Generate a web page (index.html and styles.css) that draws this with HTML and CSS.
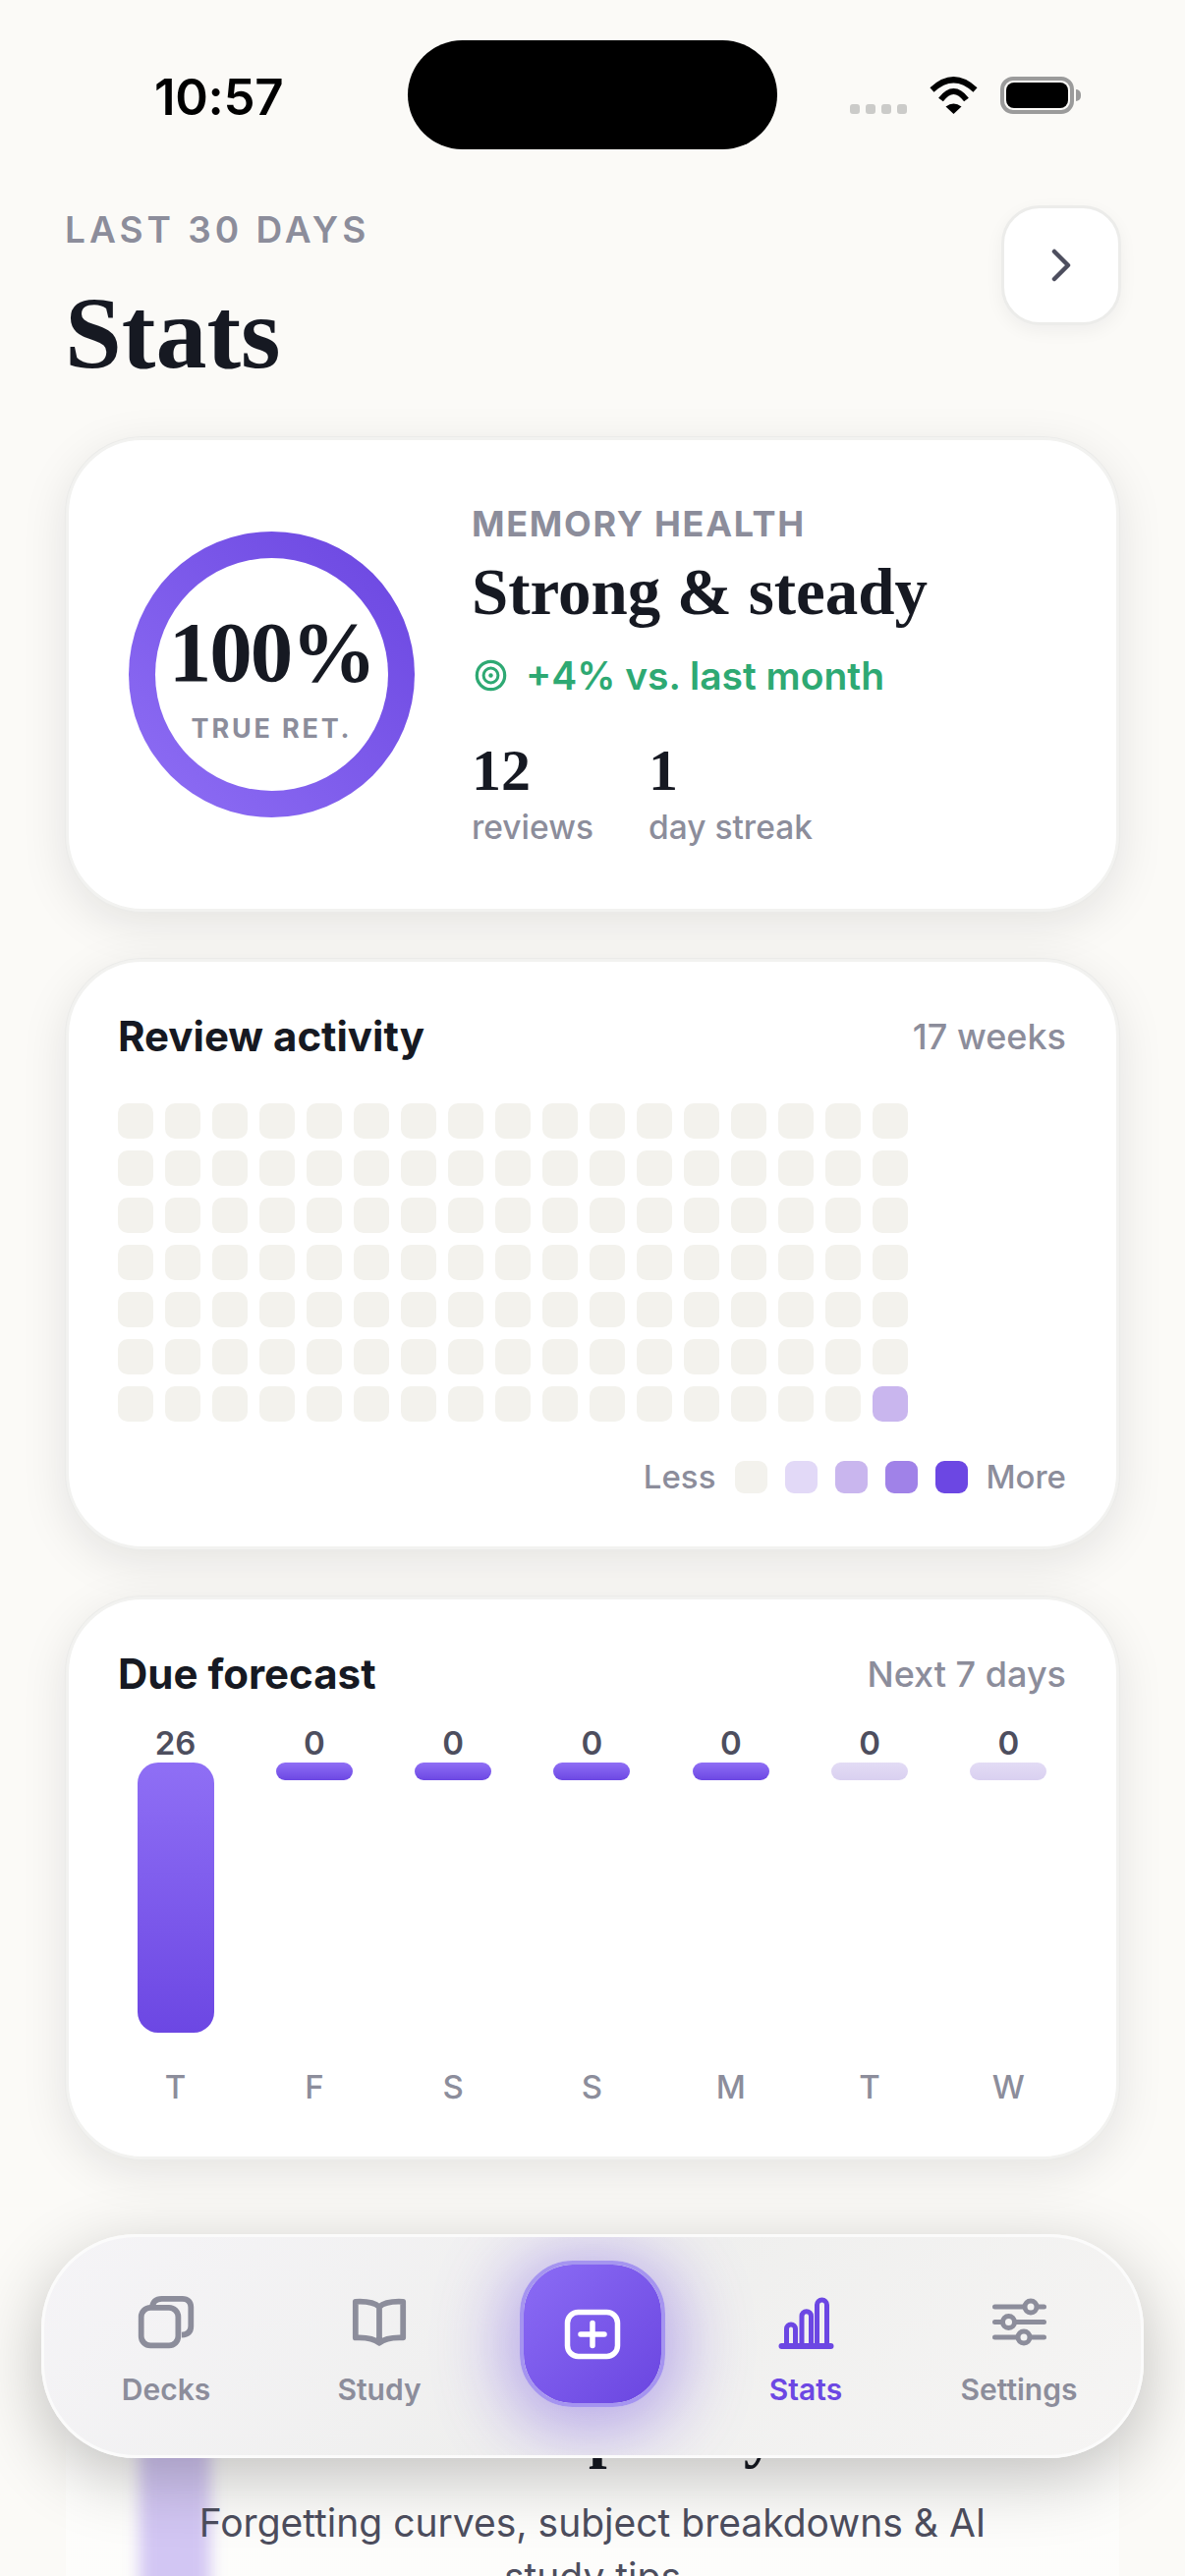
FILE: index.html
```html
<!DOCTYPE html>
<html lang="en">
<head>
<meta charset="utf-8">
<title>Stats</title>
<link rel="stylesheet" href="styles.css">
</head>
<body>
<div class="screen">
  <div class="status">
    <div class="time">10:57</div>
    <div class="island"></div>
    <div class="sys">
      <div class="dots"><i></i><i></i><i></i><i></i></div>
      <svg class="wifi" viewBox="0 0 51 38" width="51" height="38"><path d="M3.5 13.5Q25.5 -7 47.5 13.5M12.5 23.5Q25.5 6.5 38.5 23.5" fill="none" stroke="#000" stroke-width="6"/><path d="M25.5 38L17.5 30.5Q25.5 24.5 33.5 30.5Z" fill="#000"/></svg>
      <div class="battery"><div class="battery-fill"></div></div>
      <div class="battery-nub"></div>
    </div>
  </div>

  <header class="header">
    <div>
      <div class="eyebrow">LAST 30 DAYS</div>
      <h1 class="page-title">Stats</h1>
    </div>
    <button class="chev" type="button" aria-label="Next">
      <svg viewBox="0 0 24 36" width="24" height="36"><path d="M5 4L19 18L5 32" fill="none" stroke="#4d4e5e" stroke-width="4.5" stroke-linecap="round" stroke-linejoin="round"/></svg>
    </button>
  </header>

  <main class="cards">
    <section class="card health">
      <div class="ring">
        <div class="ring-hole">
          <div class="ring-num">100%</div>
          <div class="ring-label">TRUE RET.</div>
        </div>
      </div>
      <div class="health-info">
        <div class="label">MEMORY HEALTH</div>
        <div class="health-title">Strong &amp; steady</div>
        <div class="trend">
          <svg viewBox="0 0 33 33" width="33" height="33"><circle cx="16.5" cy="16.5" r="14.2" fill="none" stroke="#2ea973" stroke-width="3.2"/><circle cx="16.5" cy="16.5" r="7.4" fill="none" stroke="#2ea973" stroke-width="3"/><circle cx="16.5" cy="16.5" r="2.2" fill="#2ea973"/></svg>
          <span>+4% vs. last month</span>
        </div>
        <div class="mini-stats">
          <div><div class="mini-num">12</div><div class="mini-label">reviews</div></div>
          <div><div class="mini-num">1</div><div class="mini-label">day streak</div></div>
        </div>
      </div>
    </section>

    <section class="card activity">
      <div class="card-head"><h2 class="card-title">Review activity</h2><span class="card-note">17 weeks</span></div>
      <div class="heat">
        <i></i><i></i><i></i><i></i><i></i><i></i><i></i><i></i><i></i><i></i><i></i><i></i><i></i><i></i><i></i><i></i><i></i>
        <i></i><i></i><i></i><i></i><i></i><i></i><i></i><i></i><i></i><i></i><i></i><i></i><i></i><i></i><i></i><i></i><i></i>
        <i></i><i></i><i></i><i></i><i></i><i></i><i></i><i></i><i></i><i></i><i></i><i></i><i></i><i></i><i></i><i></i><i></i>
        <i></i><i></i><i></i><i></i><i></i><i></i><i></i><i></i><i></i><i></i><i></i><i></i><i></i><i></i><i></i><i></i><i></i>
        <i></i><i></i><i></i><i></i><i></i><i></i><i></i><i></i><i></i><i></i><i></i><i></i><i></i><i></i><i></i><i></i><i></i>
        <i></i><i></i><i></i><i></i><i></i><i></i><i></i><i></i><i></i><i></i><i></i><i></i><i></i><i></i><i></i><i></i><i></i>
        <i></i><i></i><i></i><i></i><i></i><i></i><i></i><i></i><i></i><i></i><i></i><i></i><i></i><i></i><i></i><i></i><i class="lv2"></i>
      </div>
      <div class="legend">
        <span class="legend-less">Less</span>
        <b class="swatch lv0"></b><b class="swatch lv1"></b><b class="swatch lv2"></b><b class="swatch lv3"></b><b class="swatch lv4"></b>
        <span class="legend-more">More</span>
      </div>
    </section>

    <section class="card forecast">
      <div class="card-head"><h2 class="card-title">Due forecast</h2><span class="card-note">Next 7 days</span></div>
      <div class="bars">
        <div class="col"><div class="count">26</div><div class="track"><div class="bar tall"></div></div><div class="day">T</div></div>
        <div class="col"><div class="count">0</div><div class="track"><div class="bar"></div></div><div class="day">F</div></div>
        <div class="col"><div class="count">0</div><div class="track"><div class="bar"></div></div><div class="day">S</div></div>
        <div class="col"><div class="count">0</div><div class="track"><div class="bar"></div></div><div class="day">S</div></div>
        <div class="col"><div class="count">0</div><div class="track"><div class="bar"></div></div><div class="day">M</div></div>
        <div class="col"><div class="count">0</div><div class="track"><div class="bar pale"></div></div><div class="day">T</div></div>
        <div class="col"><div class="count">0</div><div class="track"><div class="bar pale"></div></div><div class="day">W</div></div>
      </div>
    </section>

    <section class="promo">
      <div class="promo-band"></div>
      <div class="promo-title">Go deep daily.</div>
      <p class="promo-text">Forgetting curves, subject breakdowns &amp; AI study tips</p>
    </section>
  </main>

  <nav class="tabbar">
    <div class="tab">
      <svg viewBox="0 0 24 24" width="66" height="66" fill="none" stroke="#8c8d9b" stroke-width="2.1"><rect x="2.8" y="6.5" width="13.7" height="14" rx="3.4"/><path d="M6.9 6.4C7 4.4 8.2 3.2 10.4 3.2H18C20 3.2 21.2 4.4 21.2 6.4V13.4C21.2 15.5 20 16.5 17.8 16.6"/></svg>
      <span>Decks</span>
    </div>
    <div class="tab">
      <svg viewBox="0 0 24 24" width="66" height="66" fill="none" stroke="#8c8d9b" stroke-width="2.1" stroke-linejoin="round"><path d="M12 6.2C10.5 4.8 7 4.1 3.2 4.3V17.6C7 17.4 10 17.9 12 19.6C14 17.9 17 17.4 20.8 17.6V4.3C17 4.1 13.5 4.8 12 6.2ZM12 6.2V19.6"/></svg>
      <span>Study</span>
    </div>
    <div class="tab tab-fab">
      <button class="fab" type="button" aria-label="Add">
        <svg viewBox="0 0 66 66" width="66" height="66" fill="none" stroke="#fff" stroke-width="5.5" stroke-linecap="round"><rect x="7.5" y="10.5" width="51" height="45" rx="11"/><path d="M33 21.5V44.5M21 33H45"/></svg>
      </button>
    </div>
    <div class="tab active">
      <svg viewBox="0 0 66 66" width="66" height="66" fill="none" stroke="#6c47e3" stroke-width="5"><path d="M13.5 57V39.5a4.5 4.5 0 0 1 9 0V57M29 57V26.5a4.75 4.75 0 0 1 9.5 0V57M44.5 57V15a5 5 0 0 1 10 0V57"/><path d="M8.5 57H58.5" stroke-width="6" stroke-linecap="round"/></svg>
      <span>Stats</span>
    </div>
    <div class="tab">
      <svg viewBox="0 0 66 66" width="66" height="66" fill="none" stroke="#8c8d9b" stroke-width="5" stroke-linecap="round"><path d="M8.5 17H58.5M8.5 32.5H58.5M8.5 48H58.5"/><circle cx="45" cy="17" r="6" fill="#f3f3f3"/><circle cx="22.5" cy="32.5" r="6" fill="#f3f3f3"/><circle cx="38" cy="48" r="6" fill="#f3f3f3"/></svg>
      <span>Settings</span>
    </div>
  </nav>
</div>
</body>
</html>
```
FILE: styles.css
```css
* { box-sizing: border-box; }
html, body { margin: 0; padding: 0; }
body { background: #fbfaf7; font-family: Inter, "Liberation Sans", sans-serif; color: #161922; }
.screen { position: relative; width: 1206px; height: 2622px; overflow: hidden; background: #fbfaf7; }

/* status bar */
.status { display: grid; grid-template-columns: 415px 376px 1fr; height: 152px; padding-top: 41px; margin-bottom: 58px; }
.time { padding-left: 157px; font-size: 51px; font-weight: 600; line-height: 111px; color: #000; letter-spacing: -0.3px; position: relative; top: 2px; }
.island { height: 111px; background: #000; border-radius: 56px; }
.sys { display: flex; align-items: flex-start; padding: 37px 0 0 74px; }
.dots { display: flex; gap: 6px; margin-top: 28px; margin-right: 22px; }
.dots i { width: 10px; height: 10px; border-radius: 3px; background: #cbcbc9; }
.wifi { margin-right: 22px; display: block; }
.battery { width: 75px; height: 38px; border: 4px solid #9b9b9b; border-radius: 13px; padding: 2px; }
.battery-fill { width: 100%; height: 100%; background: #000; border-radius: 8px; }
.battery-nub { width: 5px; height: 12px; margin: 13px 0 0 2px; background: #9b9b9b; border-radius: 0 5px 5px 0; }

/* header */
.header { display: flex; justify-content: space-between; align-items: flex-start; padding: 0 65px 0 67px; height: 184px; margin-bottom: 51px; }
.eyebrow { margin-top: 2px; font-size: 37px; line-height: 44px; font-weight: 600; letter-spacing: 4px; color: #8c8d9b; margin-left: -1px; }
.page-title { margin: 28px 0 0 -1px; font-family: "Liberation Serif", serif; font-size: 104px; line-height: 110px; font-weight: 700; color: #161922; }
.chev { width: 122px; height: 122px; margin-top: -1px; display: flex; align-items: center; justify-content: center; padding: 0; background: #fff; border: 3px solid #ececea; border-radius: 39px; box-shadow: 0 6px 18px rgba(20, 20, 40, .05); }

/* cards */
.cards { display: flex; flex-direction: column; gap: 48px; padding: 0 67px; }
.card { position: relative; width: 1072px; background: #fff; border: 3px solid #f2f2f0; border-radius: 78px; box-shadow: 0 0 0 1px #ebebe9, 0 12px 48px rgba(20, 20, 30, .1); }

.health { display: flex; align-items: center; gap: 58px; height: 483px; padding: 0 60px 0 61px; }
.ring { flex: none; width: 291px; height: 291px; border-radius: 50%; padding: 27px; background: linear-gradient(225deg, #6a45e0 0%, #8f6ff5 100%); }
.ring-hole { width: 237px; height: 237px; border-radius: 50%; background: #fff; display: flex; flex-direction: column; align-items: center; }
.ring-num { margin-top: 54px; font-family: "Liberation Serif", serif; font-size: 87px; line-height: 84px; font-weight: 700; letter-spacing: -2px; color: #161922; }
.ring-label { margin-top: 20px; font-size: 27px; line-height: 32px; font-weight: 700; letter-spacing: 2.8px; color: #8c8d9b; }

.label { margin-top: 2px; font-size: 36px; line-height: 42px; font-weight: 700; letter-spacing: 1.7px; color: #8c8d9b; }
.health-title { margin-top: 12px; font-family: "Liberation Serif", serif; font-size: 67px; line-height: 72px; font-weight: 700; color: #161922; }
.trend { display: flex; align-items: center; gap: 19px; height: 48px; margin-top: 26px; padding-left: 3px; font-size: 39px; font-weight: 600; color: #2ea973; }
.trend svg { display: block; }
.mini-stats { display: flex; gap: 56px; margin-top: 42px; }
.mini-num { font-family: "Liberation Serif", serif; font-size: 60px; line-height: 60px; font-weight: 700; color: #161922; }
.mini-label { margin-top: 6px; font-size: 33.5px; line-height: 44px; font-weight: 500; color: #8c8d9b; }

.card-head { display: flex; justify-content: space-between; align-items: center; height: 50px; }
.card-title { margin: 0; font-size: 42px; line-height: 50px; font-weight: 700; color: #161922; }
.card-note { font-size: 36px; font-weight: 500; color: #8c8d9b; }

.activity { padding: 51px 51px 51px 50px; }
.heat { display: grid; grid-template-columns: repeat(17, 36px); grid-auto-rows: 36px; gap: 12px; margin-top: 43px; }
.heat i { display: block; border-radius: 10px; background: #f3f2ed; }
.heat i.lv2 { background: #c9b6ee; }
.legend { display: flex; justify-content: flex-end; align-items: center; gap: 18px; height: 40px; margin-top: 36px; font-size: 33px; font-weight: 500; color: #8c8d9b; }
.legend-less { margin-right: 2px; }
.swatch { display: block; width: 33px; height: 33px; border-radius: 9px; }
.lv0 { background: #f3f2ed; }
.lv1 { background: #e2d9f7; }
.lv2 { background: #c9b6ee; }
.lv3 { background: #a082e8; }
.lv4 { background: #6c47e3; }

.forecast { padding: 51px 51px 51px 50px; }
.bars { display: grid; grid-template-columns: repeat(7, 1fr); gap: 24px; margin-top: 27px; }
.col { display: flex; flex-direction: column; align-items: center; }
.count { height: 36px; font-size: 33px; line-height: 36px; font-weight: 600; color: #4d4e5e; }
.track { height: 275px; margin-top: 2px; }
.bar { width: 78px; height: 18px; border-radius: 9px; background: linear-gradient(180deg, #8f6ff5, #6c47e3); }
.bar.tall { height: 275px; border-radius: 21px; }
.bar.pale { background: linear-gradient(180deg, #e3dcf5, #d9d0f0); }
.day { height: 40px; margin-top: 35px; font-size: 33px; line-height: 40px; font-weight: 500; color: #8c8d9b; }

.promo { position: relative; width: 1072px; height: 376px; padding: 194px 60px 0; text-align: center; overflow: hidden; background: linear-gradient(180deg, rgba(255, 255, 255, 0) 200px, rgba(255, 255, 255, .55) 280px); }
.promo-band { position: absolute; left: 75px; top: 234px; width: 72px; height: 300px; background: #d2c6f3; filter: blur(8px); }
.promo-title { position: relative; font-family: "Liberation Serif", serif; font-size: 67px; line-height: 72px; font-weight: 700; letter-spacing: -0.7px; color: #161922; }
.promo-text { position: relative; margin: 29px auto 0; max-width: 840px; font-size: 39px; line-height: 54.6px; color: #4d4e5e; }

/* tab bar */
.tabbar { position: absolute; z-index: 5; left: 42px; top: 2274px; width: 1122px; height: 228px; display: grid; grid-template-columns: repeat(5, 217px); justify-content: center; align-items: start; padding-top: 24px; background: linear-gradient(135deg, #f5f4f7 0%, #efefee 50%, #f6f5f4 100%); border: 3px solid #fbfbfb; border-radius: 96px; overflow: hidden; box-shadow: 0 20px 70px rgba(0, 0, 0, .24); }
.tab { display: flex; flex-direction: column; align-items: center; padding-top: 30px; font-size: 30px; line-height: 36px; font-weight: 600; color: #8c8d9b; }
.tab svg { display: block; }
.tab span { margin-top: 17px; }
.tab.active { color: #6c47e3; }
.tab-fab { padding-top: 0; }
.fab { width: 148px; height: 149px; display: flex; align-items: center; justify-content: center; padding: 0; background: linear-gradient(135deg, #8b6cf5 0%, #6a45e0 100%); background-clip: padding-box; border: 4px solid #a594f0; border-radius: 54px; box-shadow: 0 10px 70px 16px rgba(108, 71, 227, .42); }
```
